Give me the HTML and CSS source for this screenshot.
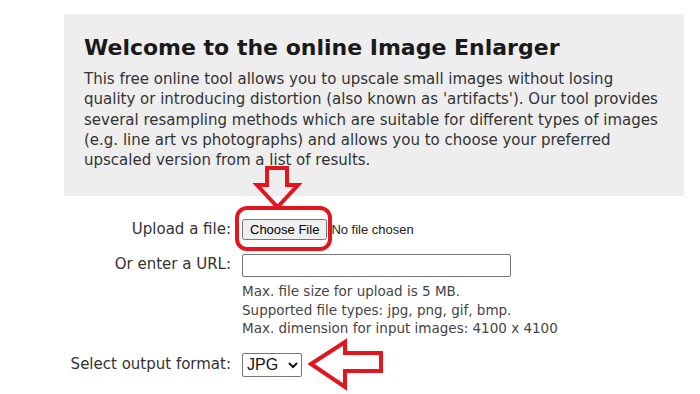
FILE: index.html
```html
<!DOCTYPE html>
<html lang="en">
<head>
  <meta charset="UTF-8">
  <title>Online Image Enlarger</title>
  <link rel="stylesheet" href="styles.css">
</head>
<body>
  <div class="page">
    <div class="intro">
      <h1>Welcome to the online Image Enlarger</h1>
      <p>This free online tool allows you to upscale small images without losing quality or introducing distortion (also known as 'artifacts'). Our tool provides several resampling methods which are suitable for different types of images (e.g. line art vs photographs) and allows you to choose your preferred upscaled version from a list of results.</p>
    </div>

    <form class="upload-form">
      <label class="row-label" for="file">Upload a file:</label>
      <div class="field file-field">
        <input type="file" id="file">
      </div>

      <label class="row-label" for="url">Or enter a URL:</label>
      <div class="field">
        <input type="text" id="url" class="url-input">
        <div class="notes">
          Max. file size for upload is 5 MB.<br>
          Supported file types: jpg, png, gif, bmp.<br>
          Max. dimension for input images: 4100 x 4100
        </div>
      </div>

      <label class="row-label select-label" for="format">Select output format:</label>
      <div class="field">
        <select id="format" class="format-select">
          <option>JPG</option>
          <option>PNG</option>
        </select>
      </div>
    </form>

    <!-- annotation marks drawn over the form -->
    <svg class="marks" width="700" height="394" viewBox="0 0 700 394">
      <polygon points="267,168 287,168 287,185 298,185 277.5,207 257,185 267,185" />
      <rect x="237" y="208" width="93" height="41" rx="10" />
      <polygon points="311,364 345,342 345,353 381,353 381,371 345,371 345,387" />
    </svg>
  </div>
</body>
</html>
```

FILE: styles.css
```css
body {
  margin: 0;
  font-family: "DejaVu Sans", Verdana, sans-serif;
  color: #222;
  background: #fff;
}
.page {
  position: relative;
  width: 700px;
  height: 394px;
  overflow: hidden;
}
.intro {
  margin: 14px 16px 0 64px;
  height: 182px;
  box-sizing: border-box;
  background: #eeeeee;
  padding: 21px 20px 0 20px;
}
h1 {
  margin: 0;
  font-size: 22px;
  font-weight: bold;
  color: #1a1a1a;
  line-height: 26px;
}
.intro p {
  margin: 8px 0 0;
  font-size: 15px;
  line-height: 20.3px;
  color: #333;
}
.upload-form {
  display: grid;
  grid-template-columns: 167px auto;
  column-gap: 11px;
  margin: 23px 0 0 64px;
  align-items: start;
}
.row-label {
  text-align: right;
  font-size: 15px;
  color: #333;
  line-height: 20px;
}
.field {
  min-height: 20px;
}
.file-field {
  margin-bottom: 14px;
}
input[type="file"] {
  font-family: "Liberation Sans", Arial, sans-serif;
  font-size: 13px;
  color: #222;
}
.url-input {
  display: block;
  width: 269px;
  height: 23px;
  box-sizing: border-box;
  border: 1px solid #767676;
  border-radius: 2px;
  margin: 0;
}
.notes {
  margin-top: 5px;
  font-size: 13.5px;
  line-height: 18.5px;
  color: #444;
}
.select-label {
  margin-top: 16px;
}
.format-select {
  margin-top: 15px;
  width: 60px;
  height: 24px;
  font-family: "Liberation Sans", Arial, sans-serif;
  font-size: 16px;
  color: #111;
  border: 1px solid #767676;
  border-radius: 2px;
  background: #fff;
}
.marks {
  position: absolute;
  left: 0;
  top: 0;
  pointer-events: none;
}
.marks polygon,
.marks rect {
  fill: none;
  stroke: #e3161f;
  stroke-width: 4;
  stroke-linejoin: miter;
}
```
